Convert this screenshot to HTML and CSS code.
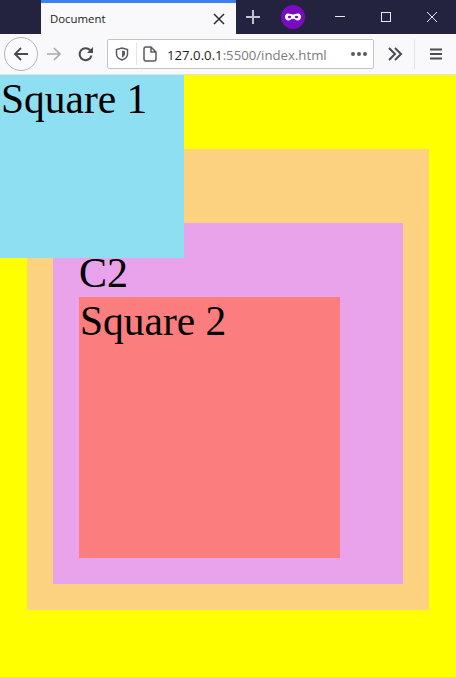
FILE: index.html
```html
<!DOCTYPE html>
<html lang="en">
<head>
    <meta charset="UTF-8">
    <title>Document</title>
    <link rel="stylesheet" href="styles.css">
</head>
<body>
    <div class="tabbar">
        <div class="tab">
            <span class="tab-title">Document</span>
            <svg class="tab-close" width="12" height="12" viewBox="0 0 12 12"><path d="M1 1l10 10M11 1L1 11" stroke="#2b2b33" stroke-width="1.5"/></svg>
        </div>
        <svg class="new-tab" width="16" height="16" viewBox="0 0 16 16"><path d="M8 1v14M1 8h14" stroke="#c4c4cf" stroke-width="2"/></svg>
        <svg class="mask" width="24" height="24" viewBox="0 0 24 24">
            <circle cx="12" cy="12" r="12" fill="#7a0bc0"/>
            <path d="M7 8.5c2 0 3 1 5 1s3-1 5-1c2.200 0 3 2 3 3.500 0 2.200-1.500 3.500-3.300 3.500-2.200 0-2.900-1.700-4.700-1.700s-2.500 1.700-4.700 1.700C5.500 15.500 4 14.200 4 12c0-1.500.8-3.500 3-3.500z" fill="#fff"/>
            <ellipse cx="8.500" cy="12" rx="1.700" ry="1.200" fill="#7a0bc0"/>
            <ellipse cx="15.500" cy="12" rx="1.700" ry="1.200" fill="#7a0bc0"/>
        </svg>
        <div class="window-controls">
            <svg width="12" height="12" viewBox="0 0 12 12"><path d="M1 5.500h10" stroke="#e8e8ee"/></svg>
            <svg width="12" height="12" viewBox="0 0 12 12"><rect x="1.500" y="1.500" width="9" height="9" fill="none" stroke="#e8e8ee"/></svg>
            <svg width="12" height="12" viewBox="0 0 12 12"><path d="M1 1l10 10M11 1L1 11" stroke="#e8e8ee"/></svg>
        </div>
    </div>

    <div class="toolbar">
        <div class="back">
            <svg width="16" height="16" viewBox="0 0 16 16"><path d="M15 8H2M8 2L2 8l6 6" fill="none" stroke="#4a4a52" stroke-width="1.800"/></svg>
        </div>
        <svg class="forward" width="16" height="16" viewBox="0 0 16 16"><path d="M1 8h13M8 2l6 6-6 6" fill="none" stroke="#a9a9ae" stroke-width="1.600"/></svg>
        <svg class="reload" width="16" height="16" viewBox="0 0 16 16"><path d="M13.500 9.500A6 6 0 1 1 12 4l1.500 1.500" fill="none" stroke="#4a4a52" stroke-width="2"/><path d="M15 1v6H9z" fill="#4a4a52"/></svg>
        <div class="urlbar">
            <svg class="shield" width="14" height="14" viewBox="0 0 14 14"><path d="M7 1l5.500 1.500V7c0 3-2.500 5-5.500 6C4 12 1.500 10 1.500 7V2.500z" fill="none" stroke="#5a5a62" stroke-width="1.500"/><path d="M7 3.500l3 .8V7c0 1.600-1.300 2.800-3 3.500z" fill="#5a5a62"/></svg>
            <span class="url-sep"></span>
            <svg class="page-icon" width="14" height="16" viewBox="0 0 14 16"><path d="M3 1h5l5 5v7a2 2 0 0 1-2 2H3a2 2 0 0 1-2-2V3a2 2 0 0 1 2-2zM8 1v5h5" fill="none" stroke="#5a5a62" stroke-width="1.500"/></svg>
            <span class="url"><span class="host">127.0.0.1</span>:5500/index.html</span>
            <span class="dots"><i></i><i></i><i></i></span>
        </div>
        <svg class="overflow" width="16" height="14" viewBox="0 0 16 14"><path d="M2 1l6 6-6 6M8 1l6 6-6 6" fill="none" stroke="#4a4a52" stroke-width="2"/></svg>
        <span class="toolbar-sep"></span>
        <svg class="menu" width="14" height="12" viewBox="0 0 14 12"><path d="M1 1.500h12M1 6h12M1 10.500h12" stroke="#4a4a52" stroke-width="1.800"/></svg>
    </div>

    <div class="viewport">
        <div class="square-1">Square 1</div>
        <div class="container-1">
            C1
            <div class="container-2">
                C2
                <div class="square-2">Square 2</div>
            </div>
        </div>
    </div>
</body>
</html>
```

FILE: styles.css
```css
body {
    margin: 0;
    width: 456px;
    height: 677px;
    overflow: hidden;
    background-color: #ffff00;
    font-family: "Liberation Serif", serif;
}

.tabbar {
    display: flex;
    align-items: center;
    height: 34px;
    padding-left: 41px;
    background-color: #23233f;
}

.tab {
    display: flex;
    align-items: center;
    justify-content: space-between;
    box-sizing: border-box;
    width: 195px;
    height: 34px;
    padding: 0 11px 0 9px;
    background-color: #f9f9fb;
    border-top: 3px solid #3b82f0;
}

.tab-title {
    font-family: "Open Sans", sans-serif;
    font-size: 11.4px;
    color: #1c1b22;
}

.new-tab {
    margin-left: 9px;
}

.mask {
    margin-left: 20px;
}

.window-controls {
    display: flex;
    gap: 34px;
    margin-left: 29px;
}

.toolbar {
    display: flex;
    align-items: center;
    box-sizing: border-box;
    height: 41px;
    padding-left: 4px;
    background-color: #f9f9fb;
    border-bottom: 1px solid #e0e0e6;
}

.back {
    display: flex;
    align-items: center;
    justify-content: center;
    box-sizing: border-box;
    width: 34px;
    height: 34px;
    border: 1px solid #b5b5b9;
    border-radius: 50%;
    background-color: #fbfbfd;
}

.forward {
    margin-left: 8px;
}

.reload {
    margin-left: 16px;
}

.urlbar {
    display: flex;
    align-items: center;
    box-sizing: border-box;
    width: 267px;
    height: 30px;
    margin-left: 13px;
    padding: 0 6px 0 7px;
    background-color: #fff;
    border: 1px solid #c4c4c8;
    border-radius: 2px;
}

.url-sep {
    width: 1px;
    height: 22px;
    margin: 0 6px 0 7px;
    background-color: #e4e4e8;
}

.url {
    margin-left: 10px;
    padding-top: 1px;
    font-family: "Open Sans", sans-serif;
    font-size: 13.2px;
    color: #7b7b80;
}

.host {
    color: #1c1b22;
}

.dots {
    display: flex;
    gap: 2px;
    margin-left: auto;
}

.dots i {
    width: 4px;
    height: 4px;
    border-radius: 50%;
    background-color: #5a5a62;
}

.overflow {
    margin-left: 13px;
}

.toolbar-sep {
    width: 1px;
    height: 30px;
    margin-left: 11px;
    background-color: #e4e4e8;
}

.menu {
    margin-left: 14px;
}

.viewport {
    position: relative;
    padding: 74px 27px 0;
    font-size: 42px;
    line-height: 48px;
    color: #000;
}

.square-1 {
    position: absolute;
    top: 0;
    left: 0;
    box-sizing: border-box;
    width: 184px;
    height: 183px;
    padding-left: 1px;
    font-size: 41.5px;
    background-color: #8fdff2;
}

.container-1 {
    box-sizing: border-box;
    width: 402px;
    height: 461px;
    padding: 26px 26px 0;
    background-color: #fcd17f;
}

.container-2 {
    box-sizing: border-box;
    width: 350px;
    height: 361px;
    padding: 26px 26px 0;
    background-color: #e8a3ea;
}

.square-2 {
    box-sizing: border-box;
    width: 261px;
    height: 261px;
    padding-left: 1px;
    font-size: 41.5px;
    background-color: #fc7d7d;
}
```
